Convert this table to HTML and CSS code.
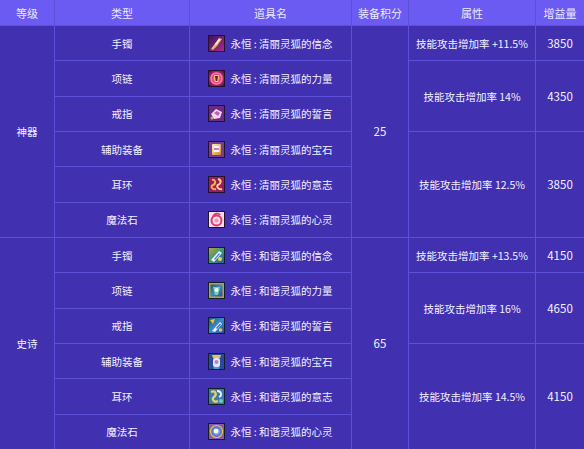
FILE: index.html
```html
<!DOCTYPE html>
<html lang="zh">
<head>
<meta charset="utf-8">
<title>装备表</title>
<link rel="stylesheet" href="styles.css">
</head>
<body>
<svg class="defs" width="0" height="0" aria-hidden="true">
  <defs>
    <linearGradient id="gPurple" x1="0" y1="0" x2="1" y2="1"><stop offset="0" stop-color="#3a1060"/><stop offset="1" stop-color="#b02c8c"/></linearGradient>
    <radialGradient id="gPink" cx="0.5" cy="0.5" r="0.6"><stop offset="0" stop-color="#ffd27a"/><stop offset="0.45" stop-color="#e0407a"/><stop offset="1" stop-color="#5a1050"/></radialGradient>
    <linearGradient id="gGold" x1="0" y1="0" x2="1" y2="1"><stop offset="0" stop-color="#fff3b0"/><stop offset="1" stop-color="#c88a20"/></linearGradient>
    <linearGradient id="gBlue" x1="0" y1="0" x2="1" y2="1"><stop offset="0" stop-color="#1a5a6a"/><stop offset="0.5" stop-color="#3a8ad0"/><stop offset="1" stop-color="#2a4a9a"/></linearGradient>
    <linearGradient id="gGreen" x1="0" y1="0" x2="1" y2="1"><stop offset="0" stop-color="#c8a030"/><stop offset="0.5" stop-color="#3a9a7a"/><stop offset="1" stop-color="#2a5aa0"/></linearGradient>
    <radialGradient id="gOrb" cx="0.5" cy="0.5" r="0.6"><stop offset="0" stop-color="#e0f0ff"/><stop offset="0.5" stop-color="#5a8ae0"/><stop offset="1" stop-color="#6a3a9a"/></radialGradient>
  </defs>
</svg>

<div class="table">
  <div class="cell head">等级</div>
  <div class="cell head">类型</div>
  <div class="cell head">道具名</div>
  <div class="cell head">装备积分</div>
  <div class="cell head">属性</div>
  <div class="cell head">增益量</div>

  <!-- 神器 -->
  <div class="cell c1 r2 span6">神器</div>
  <div class="cell c2 r2">手镯</div>
  <div class="cell c3 r2 name">
    <svg class="icon" viewBox="0 0 17 17"><rect x="0.5" y="0.5" width="16" height="16" fill="url(#gPurple)" stroke="#241030"/><path d="M3 14 L6 10 L11 3 L14 4 L9 11 L5 15 Z" fill="url(#gGold)"/><path d="M7 9 L11 4 L12 5 L8 10 Z" fill="#fff8e0"/></svg>
    <span>永恒 : 清丽灵狐的信念</span>
  </div>
  <div class="cell c4 r2 span6 num">25</div>
  <div class="cell c5 r2">技能攻击增加率 +11.5%</div>
  <div class="cell c6 r2 num">3850</div>

  <div class="cell c2 r3">项链</div>
  <div class="cell c3 r3 name">
    <svg class="icon" viewBox="0 0 17 17"><rect x="0.5" y="0.5" width="16" height="16" fill="url(#gPink)" stroke="#241030"/><circle cx="8.5" cy="8.5" r="5.5" fill="none" stroke="#ff7aa8" stroke-width="1.5"/><path d="M6 5 L11 5 L10 12 L7 12 Z" fill="#f0d070"/><path d="M7 6 L10 6 L9.3 11 L7.7 11 Z" fill="#5a2a2a"/></svg>
    <span>永恒 : 清丽灵狐的力量</span>
  </div>
  <div class="cell c5 r3 span2">技能攻击增加率 14%</div>
  <div class="cell c6 r3 span2 num">4350</div>

  <div class="cell c2 r4">戒指</div>
  <div class="cell c3 r4 name">
    <svg class="icon" viewBox="0 0 17 17"><rect x="0.5" y="0.5" width="16" height="16" fill="#6a2a8a" stroke="#241030"/><path d="M3 9 L8 4 L14 7 L12 13 L6 14 Z" fill="#f4d8f0"/><path d="M6 8 L9 6 L12 8 L10 11 Z" fill="#c060b0"/><circle cx="4" cy="13" r="1.5" fill="#e0a040"/></svg>
    <span>永恒 : 清丽灵狐的誓言</span>
  </div>

  <div class="cell c2 r5">辅助装备</div>
  <div class="cell c3 r5 name">
    <svg class="icon" viewBox="0 0 17 17"><rect x="0.5" y="0.5" width="16" height="16" fill="#7a3a9a" stroke="#241030"/><rect x="4" y="3" width="9" height="11" rx="1" fill="url(#gGold)"/><rect x="5.5" y="5" width="6" height="6" fill="#f8f0ff"/><path d="M6 7 L11 7 L11 9 L6 9 Z" fill="#d080c0"/></svg>
    <span>永恒 : 清丽灵狐的宝石</span>
  </div>
  <div class="cell c5 r5 span3">技能攻击增加率 12.5%</div>
  <div class="cell c6 r5 span3 num">3850</div>

  <div class="cell c2 r6">耳环</div>
  <div class="cell c3 r6 name">
    <svg class="icon" viewBox="0 0 17 17"><rect x="0.5" y="0.5" width="16" height="16" fill="#9a1a6a" stroke="#241030"/><path d="M4 4 C8 3 8 8 5 9 C2 10 4 14 8 13" fill="none" stroke="#f0b040" stroke-width="2"/><path d="M10 3 C14 4 13 8 10 9 C8 10 10 14 14 13" fill="none" stroke="#ffd870" stroke-width="2"/></svg>
    <span>永恒 : 清丽灵狐的意志</span>
  </div>

  <div class="cell c2 r7">魔法石</div>
  <div class="cell c3 r7 name">
    <svg class="icon" viewBox="0 0 17 17"><rect x="0.5" y="0.5" width="16" height="16" fill="#f4e0ee" stroke="#241030"/><circle cx="8.5" cy="9.5" r="5" fill="none" stroke="#e03a6a" stroke-width="2"/><path d="M5 6 C6 2 11 2 12 4" fill="none" stroke="#e03a6a" stroke-width="1.8"/><circle cx="8.5" cy="9.5" r="2" fill="#ff90b0"/></svg>
    <span>永恒 : 清丽灵狐的心灵</span>
  </div>

  <!-- 史诗 -->
  <div class="cell c1 r8 span6">史诗</div>
  <div class="cell c2 r8">手镯</div>
  <div class="cell c3 r8 name">
    <svg class="icon" viewBox="0 0 17 17"><rect x="0.5" y="0.5" width="16" height="16" fill="url(#gGreen)" stroke="#10202a"/><path d="M3 13 L11 4 L14 6 L6 15 Z" fill="#e8f4ff"/><path d="M6 12 L11 6 L12 7 L7 13 Z" fill="#4a8ae0"/><circle cx="12" cy="12" r="2" fill="#f0d060"/></svg>
    <span>永恒 : 和谐灵狐的信念</span>
  </div>
  <div class="cell c4 r8 span6 num">65</div>
  <div class="cell c5 r8">技能攻击增加率 +13.5%</div>
  <div class="cell c6 r8 num">4150</div>

  <div class="cell c2 r9">项链</div>
  <div class="cell c3 r9 name">
    <svg class="icon" viewBox="0 0 17 17"><rect x="0.5" y="0.5" width="16" height="16" fill="#c8a030" stroke="#10202a"/><rect x="2.5" y="2.5" width="12" height="12" fill="url(#gBlue)"/><path d="M5 5 L12 5 L10 13 L7 13 Z" fill="#7ad0a0"/><circle cx="8.5" cy="8" r="2" fill="#f0f4ff"/></svg>
    <span>永恒 : 和谐灵狐的力量</span>
  </div>
  <div class="cell c5 r9 span2">技能攻击增加率 16%</div>
  <div class="cell c6 r9 span2 num">4650</div>

  <div class="cell c2 r10">戒指</div>
  <div class="cell c3 r10 name">
    <svg class="icon" viewBox="0 0 17 17"><rect x="0.5" y="0.5" width="16" height="16" fill="url(#gBlue)" stroke="#10202a"/><path d="M2 3 L7 2 L5 7 Z" fill="#f0c040"/><path d="M4 14 L12 5 L14 7 L7 15 Z" fill="#e8f4ff"/><path d="M8 11 L12 6.5 L13 7.5 L9 12 Z" fill="#3a6ad0"/><circle cx="12.5" cy="13" r="1.8" fill="#f0c040"/></svg>
    <span>永恒 : 和谐灵狐的誓言</span>
  </div>

  <div class="cell c2 r11">辅助装备</div>
  <div class="cell c3 r11 name">
    <svg class="icon" viewBox="0 0 17 17"><rect x="0.5" y="0.5" width="16" height="16" fill="#2a4aa0" stroke="#10202a"/><path d="M4 2 L13 2 L12 5 L5 5 Z" fill="#f0c040"/><rect x="5" y="5" width="7" height="9" rx="2" fill="#d8e8ff"/><circle cx="8.5" cy="9" r="2" fill="#e070b0"/><path d="M5 14 L12 14 L11 16 L6 16 Z" fill="#4a9ad0"/></svg>
    <span>永恒 : 和谐灵狐的宝石</span>
  </div>
  <div class="cell c5 r11 span3">技能攻击增加率 14.5%</div>
  <div class="cell c6 r11 span3 num">4150</div>

  <div class="cell c2 r12">耳环</div>
  <div class="cell c3 r12 name">
    <svg class="icon" viewBox="0 0 17 17"><rect x="0.5" y="0.5" width="16" height="16" fill="#3a7ab0" stroke="#10202a"/><path d="M3 4 C8 2 9 7 6 9 C3 11 6 15 10 13" fill="none" stroke="#f0d060" stroke-width="2.2"/><path d="M9 3 C14 3 14 8 11 9" fill="none" stroke="#e8f4ff" stroke-width="1.8"/><circle cx="13" cy="13" r="2" fill="#70d0a0"/></svg>
    <span>永恒 : 和谐灵狐的意志</span>
  </div>

  <div class="cell c2 r13">魔法石</div>
  <div class="cell c3 r13 name">
    <svg class="icon" viewBox="0 0 17 17"><rect x="0.5" y="0.5" width="16" height="16" fill="#8a5ab0" stroke="#10202a"/><circle cx="8.5" cy="8.5" r="6" fill="url(#gOrb)"/><circle cx="8.5" cy="8.5" r="6" fill="none" stroke="#f0c040" stroke-width="1.2"/><circle cx="8" cy="8" r="2.3" fill="#ffffff"/></svg>
    <span>永恒 : 和谐灵狐的心灵</span>
  </div>
</div>
</body>
</html>
```
FILE: styles.css
```css
html, body {
  margin: 0;
  padding: 0;
  background: #4131b1;
}

.defs {
  position: absolute;
  width: 0;
  height: 0;
}

.table {
  display: grid;
  width: 584px;
  height: 449px;
  grid-template-columns: 54px 134px 161px 56px 126px 48px;
  grid-template-rows: 25px repeat(12, 1fr);
  gap: 1px;
  background: #5b50d8;
  font-family: "Noto Sans CJK SC", "Noto Sans", sans-serif;
  font-size: 10.5px;
  color: #f2f0ff;
}

.cell {
  background: #4131b1;
  display: flex;
  align-items: center;
  justify-content: center;
  white-space: nowrap;
}

.head {
  background: #6b5bf2;
  font-size: 11px;
  color: #ebe8ff;
}

.num {
  font-size: 11.5px;
}

.name {
  gap: 5px;
}

.icon {
  width: 17px;
  height: 17px;
  flex: none;
}

.c1 { grid-column: 1; }
.c2 { grid-column: 2; }
.c3 { grid-column: 3; }
.c4 { grid-column: 4; }
.c5 { grid-column: 5; }
.c6 { grid-column: 6; }

.r2 { grid-row-start: 2; }
.r3 { grid-row-start: 3; }
.r4 { grid-row-start: 4; }
.r5 { grid-row-start: 5; }
.r6 { grid-row-start: 6; }
.r7 { grid-row-start: 7; }
.r8 { grid-row-start: 8; }
.r9 { grid-row-start: 9; }
.r10 { grid-row-start: 10; }
.r11 { grid-row-start: 11; }
.r12 { grid-row-start: 12; }
.r13 { grid-row-start: 13; }

.span2 { grid-row-end: span 2; }
.span3 { grid-row-end: span 3; }
.span6 { grid-row-end: span 6; }
```
